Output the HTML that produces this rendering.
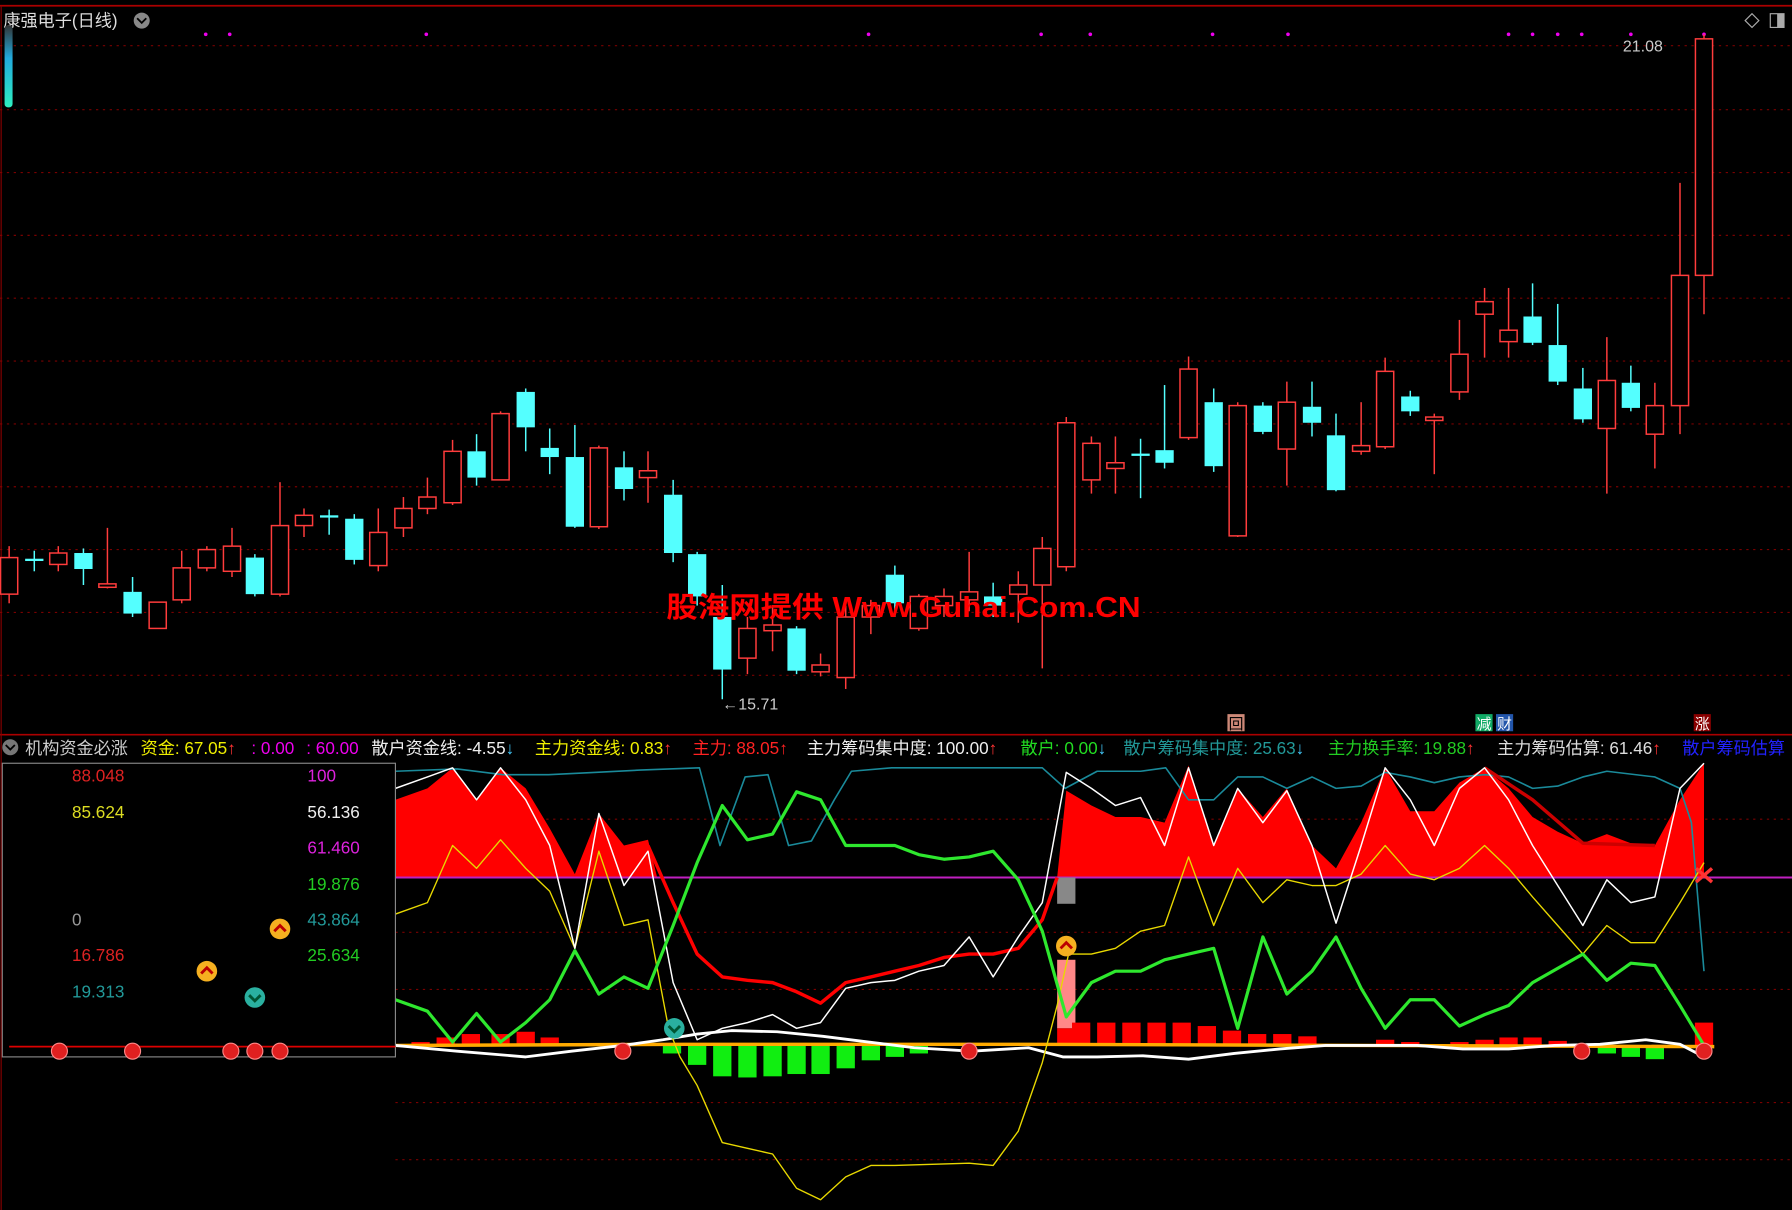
<!DOCTYPE html>
<html><head><meta charset="utf-8">
<style>
html,body{margin:0;padding:0;background:#000;width:1792px;height:1210px;overflow:hidden}
svg{display:block}
text{font-family:"Liberation Sans","Noto Sans CJK SC",sans-serif}
</style></head><body>
<svg id="s" width="1792" height="1210" viewBox="0 0 1568 1059" preserveAspectRatio="none" xmlns="http://www.w3.org/2000/svg">
<rect width="1568" height="1059" fill="#000"/>
<g id="grid"></g>
<line x1="0" y1="5" x2="1568" y2="5" stroke="#a00" stroke-width="1.5"/>
<line x1="0" y1="643" x2="1568" y2="643" stroke="#a00" stroke-width="1.5"/>
<line x1="1" y1="5" x2="1" y2="1059" stroke="#800" stroke-width="1"/>
<g id="cand"></g>
<g id="low"></g>
<text x="3" y="23" fill="#ddd" font-size="15">康强电子(日线)</text>
<circle cx="124" cy="18" r="7" fill="#888"/><path d="M120 16l4 4 4-4" stroke="#000" stroke-width="1.6" fill="none"/>
<rect x="4" y="22" width="7" height="72" rx="3" fill="url(#gb)"/>
<defs><linearGradient id="gb" x1="0" y1="0" x2="0" y2="1"><stop offset="0" stop-color="#333"/><stop offset="0.4" stop-color="#2ad"/><stop offset="1" stop-color="#2ef0c0"/></linearGradient></defs>
<path d="M1527 18l6-6 6 6-6 6z" stroke="#aaa" fill="none"/>
<rect x="1549" y="12" width="12" height="12" stroke="#aaa" fill="none"/><rect x="1555" y="12" width="6" height="12" fill="#aaa"/>
<text x="1420" y="45" fill="#ccc" font-size="14">21.08</text>
<text x="632" y="621" fill="#ccc" font-size="14">←15.71</text>
<text x="583" y="540" fill="#f00" font-size="25" font-weight="bold" textLength="415" lengthAdjust="spacingAndGlyphs">股海网提供 Www.Guhai.Com.CN</text>
<rect x="1074" y="625" width="15" height="15" fill="#c87" /><text x="1075" y="638" fill="#000" font-size="13">回</text>
<rect x="1291" y="625" width="15" height="15" fill="#1a6"/><text x="1292" y="638" fill="#fff" font-size="13">减</text>
<rect x="1309" y="625" width="15" height="15" fill="#25a"/><text x="1310" y="638" fill="#fff" font-size="13">财</text>
<rect x="1482" y="625" width="15" height="15" fill="#800"/><text x="1483" y="638" fill="#fff" font-size="13">涨</text>
<circle cx="9" cy="654" r="7" fill="#777"/><path d="M5 652l4 4 4-4" stroke="#000" stroke-width="1.6" fill="none"/>
<g font-size="15">
<text x="22" y="660" fill="#ccc">机构资金必涨</text>
<text x="123" y="660" fill="#ee0">资金: 67.05<tspan fill="#f33">↑</tspan></text>
<text x="220" y="660" fill="#e0e">: 0.00</text>
<text x="268" y="660" fill="#e0e">: 60.00</text>
<text x="325" y="660" fill="#eee">散户资金线: -4.55<tspan fill="#4cf">↓</tspan></text>
<text x="468" y="660" fill="#ee0">主力资金线: 0.83<tspan fill="#f33">↑</tspan></text>
<text x="606" y="660" fill="#f22">主力: 88.05↑</text>
<text x="706" y="660" fill="#eee">主力筹码集中度: 100.00<tspan fill="#f33">↑</tspan></text>
<text x="893" y="660" fill="#2d2">散户: 0.00<tspan fill="#4cf">↓</tspan></text>
<text x="983" y="660" fill="#299">散户筹码集中度: 25.63<tspan fill="#4cf">↓</tspan></text>
<text x="1162" y="660" fill="#2c2">主力换手率: 19.88<tspan fill="#f33">↑</tspan></text>
<text x="1310" y="660" fill="#ddd">主力筹码估算: 61.46<tspan fill="#f33">↑</tspan></text>
<text x="1472" y="660" fill="#22f">散户筹码估算</text>
</g>
<rect x="2" y="668" width="344" height="257" fill="#000" stroke="#888"/>
<g font-size="15">
<text x="63" y="684" fill="#d22">88.048</text>
<text x="63" y="716" fill="#dd2">85.624</text>
<text x="63" y="810" fill="#999">0</text>
<text x="63" y="841" fill="#d22">16.786</text>
<text x="63" y="873" fill="#299">19.313</text>
<text x="269" y="684" fill="#d2d">100</text>
<text x="269" y="716" fill="#eee">56.136</text>
<text x="269" y="747" fill="#d2d">61.460</text>
<text x="269" y="779" fill="#2c2">19.876</text>
<text x="269" y="810" fill="#299">43.864</text>
<text x="269" y="841" fill="#2c2">25.634</text>
</g>
<line x1="8" y1="916" x2="346" y2="916" stroke="#d00" stroke-width="1.5"/>
<g id="icons"></g>
</svg>
<script>
var NS="http://www.w3.org/2000/svg";
function el(p,t,a){var e=document.createElementNS(NS,t);for(var k in a)e.setAttribute(k,a[k]);document.getElementById(p).appendChild(e);return e;}
[40,96,151,206,261,316,371,426,481,536,591,717,816,866,965,1015].forEach(function(y){el('grid','line',{x1:346,y1:y,x2:1568,y2:y,stroke:'#7a0000','stroke-dasharray':'2,4'});});
[40,96,151,206,261,316,371,426,481,536,591].forEach(function(y){el('grid','line',{x1:0,y1:y,x2:346,y2:y,stroke:'#7a0000','stroke-dasharray':'2,4'});});
[180,201,373,760,911,954,1061,1127,1320,1341,1363,1384,1427,1491].forEach(function(x){el('grid','circle',{cx:x,cy:30,r:1.6,fill:'#e0e'});});
var C=[[8,'r',488,520,478,528],[30,'c',489,491,482,500],[51,'r',484,494,478,500],[73,'c',484,498,480,512],[94,'r',511,514,462,515],[116,'c',518,537,505,540],[138,'r',527,550,527,550],[159,'r',497,525,482,528],[181,'r',481,497,478,500],[203,'r',478,500,462,505],[223,'c',488,520,485,522],[245,'r',460,520,422,522],[266,'r',451,460,445,470],[288,'c',451,453,446,468],[310,'c',454,490,450,494],[331,'r',466,495,445,500],[353,'r',445,462,435,470],[374,'r',435,445,418,450],[396,'r',395,440,385,442],[417,'c',395,418,380,425],[438,'r',362,420,360,420],[460,'c',343,374,340,395],[481,'c',392,400,375,415],[503,'c',400,461,372,462],[524,'r',392,461,390,463],[546,'c',409,428,395,438],[567,'r',412,418,395,440],[589,'c',433,484,420,492],[610,'c',485,522,483,530],[632,'c',540,586,512,612],[654,'r',550,576,540,590],[676,'r',547,552,530,570],[697,'c',550,587,548,590],[718,'r',582,588,572,592],[740,'r',540,593,530,603],[762,'r',530,540,525,555],[783,'c',503,528,495,540],[804,'r',522,550,520,552],[826,'r',522,530,515,540],[848,'r',518,525,483,535],[869,'c',522,530,510,540],[891,'r',512,520,500,545],[912,'r',480,512,470,585],[933,'r',370,496,365,500],[955,'r',388,420,382,432],[976,'r',405,410,382,432],[998,'c',397,399,384,436],[1019,'c',394,405,337,410],[1040,'r',323,383,312,385],[1062,'c',352,408,340,413],[1083,'r',355,469,352,470],[1105,'c',355,378,352,380],[1126,'r',352,393,334,425],[1148,'c',356,370,334,382],[1169,'c',381,429,362,430],[1191,'r',390,395,352,398],[1212,'r',325,391,313,393],[1234,'c',347,360,342,364],[1255,'r',365,368,362,415],[1277,'r',310,343,280,350],[1299,'r',264,275,252,313],[1320,'r',289,299,252,313],[1341,'c',277,300,248,302],[1363,'c',302,334,266,337],[1385,'c',340,367,322,370],[1406,'r',333,375,295,432],[1427,'c',335,357,320,360],[1448,'r',355,380,335,410],[1470,'r',241,355,160,380],[1491,'r',34,241,30,275]];
C.forEach(function(c){var col=c[1]=='r'?'#ff3c3c':'#54ffff';
el('cand','line',{x1:c[0],y1:c[4],x2:c[0],y2:c[5],stroke:col,'stroke-width':1.3});
if(c[1]=='r')el('cand','rect',{x:c[0]-7.5,y:c[2],width:15,height:Math.max(1,c[3]-c[2]),fill:'#000',stroke:col,'stroke-width':1.3});
else el('cand','rect',{x:c[0]-8,y:c[2],width:16,height:Math.max(1.5,c[3]-c[2]),fill:col});});
function pl(pts,col,w){el('low','polyline',{points:pts.map(function(p){return p.join(',')}).join(' '),fill:'none',stroke:col,'stroke-width':w,'stroke-linejoin':'round'});}
var f1=[[346,768],[346,700],[374,690],[396,672],[417,700],[438,672],[460,690],[481,725],[503,765],[524,712],[546,740],[567,735],[575,768]];
var f2=[[925,768],[933,692],[955,705],[976,715],[998,715],[1019,720],[1040,670],[1062,740],[1083,690],[1105,715],[1126,690],[1148,740],[1169,760],[1191,720],[1212,672],[1234,710],[1255,710],[1277,685],[1299,672],[1320,690],[1341,715],[1363,728],[1385,738],[1406,730],[1427,738],[1448,740],[1470,700],[1491,668],[1491,768]];
[f1,f2].forEach(function(f){el('low','polygon',{points:f.map(function(p){return p.join(',')}).join(' '),fill:'#ff0000'});});
el('low','line',{x1:346,y1:768,x2:1568,y2:768,stroke:'#c020c0','stroke-width':1.8});
el('low','rect',{x:925,y:768,width:16,height:23,fill:'#888'});
el('low','rect',{x:925,y:840,width:16,height:60,fill:'#f88'});
el('low','rect',{x:925,y:900,width:16,height:15,fill:'#f00'});
[[368,912],[390,908],[412,905],[438,905],[460,903],[481,908],[946,895],[968,895],[990,895],[1012,895],[1034,895],[1056,898],[1078,902],[1100,905],[1122,905],[1144,907],[1212,910],[1234,912],[1277,912],[1299,910],[1320,908],[1341,908],[1363,911],[1491,895]].forEach(function(b){el('low','rect',{x:b[0]-8,y:b[1],width:16,height:915-b[1],fill:'#f00'});});
[[588,922],[610,932],[632,942],[654,943],[676,942],[697,940],[718,940],[740,935],[762,928],[783,925],[804,922],[1406,922],[1427,925],[1448,927]].forEach(function(b){el('low','rect',{x:b[0]-8,y:915,width:16,height:b[1]-915,fill:'#1e1'});});
pl([[346,915],[600,914],[900,914],[1500,916]],'#fa0',3);
pl([[346,915],[400,920],[460,925],[500,920],[545,915],[580,910],[610,905],[640,902],[680,903],[720,907],[760,912],[800,917],[850,920],[900,917],[930,925],[960,925],[1000,924],[1040,927],[1080,922],[1120,918],[1160,915],[1200,915],[1240,915],[1280,918],[1320,918],[1360,915],[1400,914],[1440,910],[1470,914],[1491,925]],'#fff',2.5);
pl([[346,675],[400,673],[440,678],[480,678],[520,676],[560,674],[612,672],[630,740],[652,680],[672,678],[690,740],[710,736],[730,700],[745,675],[780,672],[912,672],[932,690],[960,675],[998,675],[1020,672],[1040,700],[1062,700],[1083,680],[1105,680],[1126,690],[1148,680],[1169,690],[1191,688],[1212,676],[1234,680],[1255,685],[1277,680],[1299,678],[1320,680],[1341,690],[1363,688],[1385,680],[1406,675],[1448,680],[1470,690],[1480,720],[1491,850]],'#1a8a9a',1.4);
pl([[567,740],[589,790],[610,835],[632,855],[654,858],[676,860],[697,868],[718,878],[740,860],[762,855],[783,850],[804,845],[826,838],[848,835],[869,835],[891,830],[912,805],[925,768]],'#f00',3);
pl([[1299,672],[1341,700],[1385,738],[1448,740]],'#c00',3);
pl([[346,800],[374,790],[396,740],[417,760],[438,735],[460,760],[481,780],[503,830],[524,745],[546,810],[567,805],[585,900],[595,925],[610,950],[632,1000],[654,1005],[676,1010],[697,1040],[718,1050],[740,1030],[762,1020],[783,1020],[848,1018],[869,1020],[891,990],[912,930],[925,880],[935,835],[955,835],[976,830],[998,815],[1019,810],[1040,750],[1062,810],[1083,760],[1105,790],[1126,770],[1148,775],[1169,775],[1191,765],[1212,740],[1234,765],[1255,770],[1277,760],[1299,740],[1320,760],[1341,785],[1363,810],[1385,835],[1406,810],[1427,825],[1448,825],[1470,790],[1491,755]],'#e8d800',1.2);
pl([[346,690],[374,680],[396,672],[417,700],[438,672],[460,700],[481,740],[503,830],[524,712],[546,775],[567,745],[589,860],[610,910],[632,900],[654,895],[676,888],[697,900],[718,895],[740,865],[762,860],[783,858],[804,850],[826,845],[848,820],[869,855],[891,820],[912,790],[933,676],[955,690],[976,705],[998,698],[1019,740],[1040,672],[1062,740],[1083,690],[1105,720],[1126,692],[1148,740],[1169,808],[1191,740],[1212,672],[1234,700],[1255,740],[1277,690],[1299,672],[1320,700],[1341,740],[1363,775],[1385,810],[1406,770],[1427,790],[1448,785],[1470,690],[1491,668]],'#fff',1.3);
pl([[346,875],[374,885],[396,912],[417,887],[438,912],[460,895],[481,875],[503,832],[524,870],[546,855],[567,865],[589,810],[610,755],[632,705],[654,735],[676,730],[697,693],[718,700],[740,740],[783,740],[804,748],[826,752],[848,750],[869,745],[891,770],[912,815],[933,890],[955,860],[976,850],[998,850],[1019,840],[1040,835],[1062,830],[1083,900],[1105,820],[1126,870],[1148,850],[1169,820],[1191,865],[1212,900],[1234,875],[1255,875],[1277,898],[1299,888],[1320,880],[1341,860],[1385,835],[1406,858],[1427,843],[1448,845],[1470,880],[1491,915]],'#2ee82e',2.8);
[52,116,202,223,245,545,848,1384,1491].forEach(function(x){el('icons','circle',{cx:x,cy:920,r:7,fill:'#e02020',stroke:'#f88','stroke-width':1});});
[[181,850],[245,813],[933,828]].forEach(function(p){el('icons','circle',{cx:p[0],cy:p[1],r:9,fill:'#f5b020'});el('icons','path',{d:'M'+(p[0]-5)+' '+(p[1]+2)+'l5-5 5 5',stroke:'#b00','stroke-width':2.5,fill:'none'});});
[[223,873],[590,900]].forEach(function(p){el('icons','circle',{cx:p[0],cy:p[1],r:9,fill:'#2ab0a0'});el('icons','path',{d:'M'+(p[0]-5)+' '+(p[1]-2)+'l5 5 5-5',stroke:'#053','stroke-width':2.5,fill:'none'});});
el('icons','path',{d:'M1484 760l14 12M1484 772l14-12',stroke:'#f33','stroke-width':3});
</script>
</body></html>
